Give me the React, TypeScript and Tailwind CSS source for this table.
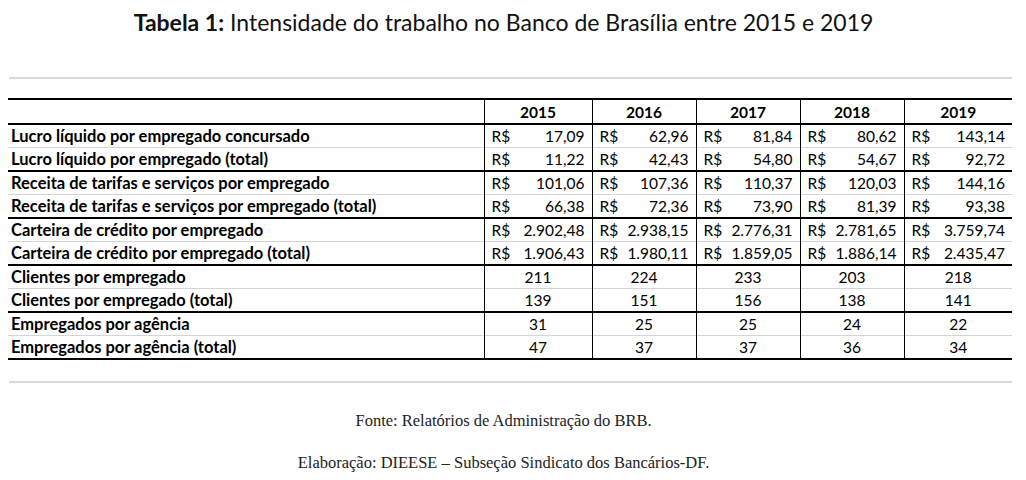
const years = ["2015", "2016", "2017", "2018", "2019"];

type Row = { label: string; money: boolean; values: string[]; groupEnd: boolean };

const rows: Row[] = [
  { label: "Lucro líquido por empregado concursado", money: true, values: ["17,09", "62,96", "81,84", "80,62", "143,14"], groupEnd: false },
  { label: "Lucro líquido por empregado (total)", money: true, values: ["11,22", "42,43", "54,80", "54,67", "92,72"], groupEnd: true },
  { label: "Receita de tarifas e serviços por empregado", money: true, values: ["101,06", "107,36", "110,37", "120,03", "144,16"], groupEnd: false },
  { label: "Receita de tarifas e serviços por empregado (total)", money: true, values: ["66,38", "72,36", "73,90", "81,39", "93,38"], groupEnd: true },
  { label: "Carteira de crédito por empregado", money: true, values: ["2.902,48", "2.938,15", "2.776,31", "2.781,65", "3.759,74"], groupEnd: false },
  { label: "Carteira de crédito por empregado (total)", money: true, values: ["1.906,43", "1.980,11", "1.859,05", "1.886,14", "2.435,47"], groupEnd: true },
  { label: "Clientes por empregado", money: false, values: ["211", "224", "233", "203", "218"], groupEnd: false },
  { label: "Clientes por empregado (total)", money: false, values: ["139", "151", "156", "138", "141"], groupEnd: true },
  { label: "Empregados por agência", money: false, values: ["31", "25", "25", "24", "22"], groupEnd: false },
  { label: "Empregados por agência (total)", money: false, values: ["47", "37", "37", "36", "34"], groupEnd: true },
];

const colWidths = ["w-[108px]", "w-[104px]", "w-[104px]", "w-[104px]", "w-[108px]"];

export default function App() {
  return (
    <div className="w-[1026px] h-[480px] bg-white text-black font-['Lato',sans-serif] overflow-hidden">
      <h1 className="pt-[8px] pr-[19px] text-center text-[23px] leading-[28px] text-[#111]">
        <span className="font-bold">Tabela 1:</span> Intensidade do trabalho no Banco de Brasília entre 2015 e 2019
      </h1>

      <div className="mt-[41px] mx-[9px] mr-[14px] h-[2px] bg-[#d9d9d9]" />

      <table className="mt-[19px] ml-[8px] w-[1004px] table-fixed border-collapse text-[16.5px] leading-[22px]">
        <colgroup>
          <col className="w-[476px]" />
          {colWidths.map((w, i) => (
            <col key={i} className={w} />
          ))}
        </colgroup>
        <thead>
          <tr className="h-[25px] border-t-2 border-b-2 border-black">
            <th />
            {years.map((y) => (
              <th key={y} className="border-l-[1.5px] border-black text-center text-[15.5px] font-bold">
                {y}
              </th>
            ))}
          </tr>
        </thead>
        <tbody>
          {rows.map((r) => (
            <tr
              key={r.label}
              className={
                r.groupEnd
                  ? "h-[22.6px] border-b-2 border-black"
                  : "h-[22.6px] border-b border-[#d4d4d4]"
              }
            >
              <td className="pl-[3px] font-bold whitespace-nowrap">{r.label}</td>
              {r.values.map((v, i) => (
                <td key={i} className="border-l-[1.5px] border-black px-[7px] text-[15.5px]">
                  {r.money ? (
                    <div className="flex justify-between">
                      <span>R$</span>
                      <span>{v}</span>
                    </div>
                  ) : (
                    <div className="text-center">{v}</div>
                  )}
                </td>
              ))}
            </tr>
          ))}
        </tbody>
      </table>

      <div className="mt-[21px] mx-[9px] mr-[14px] h-[2px] bg-[#d9d9d9]" />

      <div className="pr-[19px] font-['Liberation_Serif',serif] text-[16.5px] leading-[20px] text-center text-[#222]">
        <p className="mt-[28px]">Fonte: Relatórios de Administração do BRB.</p>
        <p className="mt-[22px]">Elaboração: DIEESE – Subseção Sindicato dos Bancários-DF.</p>
      </div>
    </div>
  );
}
